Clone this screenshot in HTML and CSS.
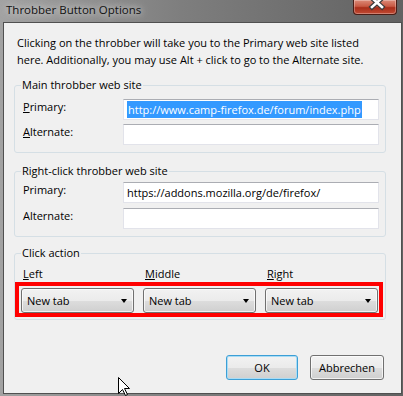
FILE: index.html
```html
<!DOCTYPE html>
<html lang="en">
<head>
  <meta charset="UTF-8" />
  <title>Throbber Button Options</title>
  <link rel="stylesheet" href="styles.css">
</head>
<body>
  <div class="window">
    <div class="titlebar">
      <span class="title">Throbber Button Options</span>
      <div class="close">
        <svg width="44" height="15" viewBox="0 0 44 15">
          <path d="M19 -1 L29 8 M29 -1 L19 8" stroke="#3b3b3b" stroke-width="5" stroke-linecap="square" fill="none"/>
          <path d="M19 -1 L29 8 M29 -1 L19 8" stroke="#fff" stroke-width="2.6" stroke-linecap="square" fill="none"/>
        </svg>
      </div>
    </div>

    <div class="client">
      <p class="intro">Clicking on the throbber will take you to the Primary web site listed here. Additionally, you may use Alt + click to go to the Alternate site.</p>

      <fieldset class="group group-main">
        <legend>Main throbber web site</legend>
        <div class="rows">
          <label><u>P</u>rimary:</label>
          <div class="field"><span class="selected">http://www.camp-firefox.de/forum/index.php</span></div>
          <label><u>A</u>lternate:</label>
          <div class="field"></div>
        </div>
      </fieldset>

      <fieldset class="group group-right">
        <legend>Right-click throbber web site</legend>
        <div class="rows">
          <label>Primary:</label>
          <div class="field">https://addons.mozilla.org/de/firefox/</div>
          <label>Alternate:</label>
          <div class="field"></div>
        </div>
      </fieldset>

      <fieldset class="group group-click">
        <legend>Click action</legend>
        <div class="click-labels">
          <span><u>L</u>eft</span>
          <span><u>M</u>iddle</span>
          <span><u>R</u>ight</span>
        </div>
        <div class="click-selects">
          <div class="dropdown">New tab <i class="arrow"></i></div>
          <div class="dropdown">New tab <i class="arrow"></i></div>
          <div class="dropdown">New tab <i class="arrow"></i></div>
        </div>
      </fieldset>

      <div class="footer">
        <button class="btn btn-default">OK</button>
        <button class="btn">Abbrechen</button>
      </div>
    </div>

    <svg class="cursor" width="13" height="20" viewBox="0 0 13 20">
      <path d="M0.5 0.5 L0.5 16.5 L4.5 12.5 L7.5 18.5 L9.5 17.5 L6.5 11.5 L11.5 11.5 Z" fill="#fff" stroke="#000" stroke-width="1"/>
    </svg>
  </div>
</body>
</html>
```

FILE: styles.css
```css
* { box-sizing: border-box; }
body { margin: 0; font-family: "Open Sans", "Noto Sans", sans-serif; font-size: 11px; color: #000; }

.window { position: relative; width: 403px; height: 396px; padding: 0 1px 2px 3px; display: flex; flex-direction: column; overflow: hidden; background: linear-gradient(to right, #a2a2a2, #7e7e7e 45%, #626262); }
.titlebar { height: 22px; margin-left: -3px; padding-left: 6px; display: flex; justify-content: space-between; align-items: flex-start; }
.title { font-size: 11.5px; line-height: 20px; color: #111; text-shadow: 0 0 6px #d8d8d8, 0 0 10px #cfcfcf; }
.close { width: 44px; height: 15px; margin-right: 5px; border: 1px solid #4a1d16; border-top: none; border-radius: 0 0 4px 4px; background: linear-gradient(#dc8a78, #c85a44 45%, #a92e1a 55%, #c14a33); box-shadow: inset 0 0 0 1px rgba(255,255,255,0.3); }
.close svg { display: block; margin: -1px 0 0 -1px; }

.client { flex: 1; display: flex; flex-direction: column; background: #f0f0f0; border: 1px solid #505050; }
.intro { margin: 11px 0 0 13px; line-height: 17px; width: 370px; }

.group { margin: 0 0 0 10px; width: 372px; min-width: 0; border: 1px solid #d5dfe5; border-radius: 3px; padding: 6px 6px 7px 6px; }
.group legend { padding: 0 1px; line-height: 16px; }
.group-main { margin-top: 9px; }
.group-right { margin-top: 10px; padding-top: 3px; }
.group-click { margin-top: 8px; padding-top: 5px; padding-bottom: 2px; }

.rows { display: grid; grid-template-columns: 102px 1fr; row-gap: 4px; }
.group-right .rows { row-gap: 5px; }
.rows label { padding-left: 2px; line-height: 16px; }
.field { height: 21px; background: #fff; border: 1px solid #e2e3ea; border-top-color: #abadb3; padding: 1px 3px; line-height: 17px; white-space: nowrap; overflow: hidden; }
.selected { display: inline-block; background: #3399ff; color: #fff; padding: 0 1px; }

.click-labels, .click-selects { display: flex; gap: 9px; }
.click-labels span { width: 113px; padding-left: 2px; line-height: 16px; }
.click-selects { margin: 0 -4px 0 -6px; border: 4px solid #ff0000; padding: 2px 1px 0 2px; }
.dropdown { position: relative; width: 113px; height: 25px; padding-left: 5px; line-height: 23px; border: 1px solid #707070; border-radius: 3px; background: linear-gradient(#f2f2f2, #ebebeb 50%, #dddddd 51%, #cfcfcf); box-shadow: inset 0 0 0 1px rgba(255,255,255,0.7); }
.arrow { position: absolute; right: 6px; top: 10px; width: 0; height: 0; border-left: 3.5px solid transparent; border-right: 3.5px solid transparent; border-top: 4px solid #000; }

.footer { margin-top: auto; padding: 0 17px 13px 0; display: flex; justify-content: flex-end; gap: 12px; }
.btn { height: 25px; font: inherit; color: #000; border: 1px solid #707070; border-radius: 3px; background: linear-gradient(#f2f2f2, #ebebeb 50%, #dddddd 51%, #cfcfcf); box-shadow: inset 0 0 0 1px rgba(255,255,255,0.7); padding: 0; width: 74px; }
.btn-default { width: 72px; border-color: #3c9fd6; box-shadow: inset 0 0 0 1px #a9dcf5; }

.cursor { position: absolute; left: 118px; top: 377px; }
```
